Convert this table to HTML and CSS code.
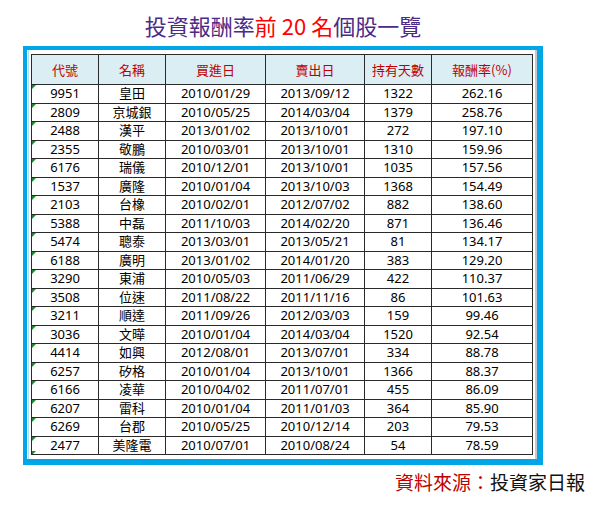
FILE: index.html
```html
<!DOCTYPE html>
<html lang="zh-Hant">
<head>
<meta charset="utf-8">
<title>投資報酬率前 20 名個股一覽</title>
<link rel="stylesheet" href="styles.css">
</head>
<body>
<div class="page">
  <h1 class="title">投資報酬率<span class="hl">前 20 名</span>個股一覽</h1>
  <div class="frame">
    <table class="grid">
      <colgroup>
        <col class="c1"><col class="c2"><col class="c3"><col class="c4"><col class="c5"><col class="c6">
      </colgroup>
      <thead>
        <tr><th>代號</th><th>名稱</th><th>買進日</th><th>賣出日</th><th>持有天數</th><th>報酬率(%)</th></tr>
      </thead>
      <tbody>
        <tr><td>9951</td><td>皇田</td><td>2010/01/29</td><td>2013/09/12</td><td>1322</td><td>262.16</td></tr>
        <tr><td>2809</td><td>京城銀</td><td>2010/05/25</td><td>2014/03/04</td><td>1379</td><td>258.76</td></tr>
        <tr><td>2488</td><td>漢平</td><td>2013/01/02</td><td>2013/10/01</td><td>272</td><td>197.10</td></tr>
        <tr><td>2355</td><td>敬鵬</td><td>2010/03/01</td><td>2013/10/01</td><td>1310</td><td>159.96</td></tr>
        <tr><td>6176</td><td>瑞儀</td><td>2010/12/01</td><td>2013/10/01</td><td>1035</td><td>157.56</td></tr>
        <tr><td>1537</td><td>廣隆</td><td>2010/01/04</td><td>2013/10/03</td><td>1368</td><td>154.49</td></tr>
        <tr><td>2103</td><td>台橡</td><td>2010/02/01</td><td>2012/07/02</td><td>882</td><td>138.60</td></tr>
        <tr><td>5388</td><td>中磊</td><td>2011/10/03</td><td>2014/02/20</td><td>871</td><td>136.46</td></tr>
        <tr><td>5474</td><td>聰泰</td><td>2013/03/01</td><td>2013/05/21</td><td>81</td><td>134.17</td></tr>
        <tr><td>6188</td><td>廣明</td><td>2013/01/02</td><td>2014/01/20</td><td>383</td><td>129.20</td></tr>
        <tr><td>3290</td><td>東浦</td><td>2010/05/03</td><td>2011/06/29</td><td>422</td><td>110.37</td></tr>
        <tr><td>3508</td><td>位速</td><td>2011/08/22</td><td>2011/11/16</td><td>86</td><td>101.63</td></tr>
        <tr><td>3211</td><td>順達</td><td>2011/09/26</td><td>2012/03/03</td><td>159</td><td>99.46</td></tr>
        <tr><td>3036</td><td>文曄</td><td>2010/01/04</td><td>2014/03/04</td><td>1520</td><td>92.54</td></tr>
        <tr><td>4414</td><td>如興</td><td>2012/08/01</td><td>2013/07/01</td><td>334</td><td>88.78</td></tr>
        <tr><td>6257</td><td>矽格</td><td>2010/01/04</td><td>2013/10/01</td><td>1366</td><td>88.37</td></tr>
        <tr><td>6166</td><td>凌華</td><td>2010/04/02</td><td>2011/07/01</td><td>455</td><td>86.09</td></tr>
        <tr><td>6207</td><td>雷科</td><td>2010/01/04</td><td>2011/01/03</td><td>364</td><td>85.90</td></tr>
        <tr><td>6269</td><td>台郡</td><td>2010/05/25</td><td>2010/12/14</td><td>203</td><td>79.53</td></tr>
        <tr class="last"><td>2477</td><td>美隆電</td><td>2010/07/01</td><td>2010/08/24</td><td>54</td><td>78.59</td></tr>
      </tbody>
    </table>
  </div>
  <p class="source"><span class="src-label">資料來源：</span>投資家日報</p>
</div>
</body>
</html>
```

FILE: styles.css
```css
* { box-sizing: border-box; }

html, body {
  margin: 0;
  padding: 0;
  background: #ffffff;
}

body {
  width: 600px;
  height: 506px;
  overflow: hidden;
  font-family: "Noto Sans", "Noto Sans CJK TC", sans-serif;
}

.page {
  display: flex;
  flex-direction: column;
}

.title {
  width: 520px;
  margin: 0 0 0 23px;
  height: 46px;
  padding-top: 10px;
  text-align: center;
  font-family: "Noto Sans CJK TC", sans-serif;
  font-size: 22px;
  font-weight: 400;
  line-height: 30px;
  color: #4b2a88;
}

.title .hl {
  color: #ff0000;
}

.frame {
  margin-left: 23px;
  width: 520px;
  border-style: solid;
  border-color: #00a6e6;
  border-width: 4px 6px 6px 4px;
  padding: 4px 5px 4px 4px;
  background: #ffffff;
  box-shadow: inset 1px 0 0 #ffffff, inset 2px 0 0 #b6e0f2, inset -2px 0 0 #c8c8c8;
}

.grid {
  width: 501px;
  table-layout: fixed;
  border-collapse: collapse;
  font-family: "Noto Sans", "Noto Sans CJK TC", sans-serif;
  font-size: 13px;
  color: #000000;
}

.c1 { width: 67px; }
.c2 { width: 67px; }
.c3 { width: 100px; }
.c4 { width: 99px; }
.c5 { width: 67px; }
.c6 { width: 101px; }

.grid th,
.grid td {
  border: 1px solid #2a2a2a;
  padding: 0;
  text-align: center;
  white-space: nowrap;
  overflow: hidden;
}

.grid th {
  height: 30px;
  background: #daeef3;
  color: #c00000;
  font-family: "Noto Sans CJK TC", sans-serif;
  font-weight: 400;
  font-size: 13px;
  line-height: 28px;
}

.grid td {
  height: 18.5px;
  line-height: 17px;
}

.grid td:first-child {
  position: relative;
}

.grid td:first-child::before {
  content: "";
  position: absolute;
  left: 0;
  top: 0;
  border-style: solid;
  border-width: 4px 4px 0 0;
  border-color: #1e8a2e transparent transparent transparent;
}

.grid tr.last td:first-child::after {
  content: "";
  position: absolute;
  left: 0;
  bottom: -1px;
  border-style: solid;
  border-width: 4px 4px 0 0;
  border-color: #1e8a2e transparent transparent transparent;
}

.source {
  margin: 0;
  padding: 4px 15px 0 0;
  text-align: right;
  font-family: "Noto Sans CJK TC", sans-serif;
  font-size: 19px;
  line-height: 26px;
  color: #111111;
}

.src-label {
  color: #c00000;
}
```
